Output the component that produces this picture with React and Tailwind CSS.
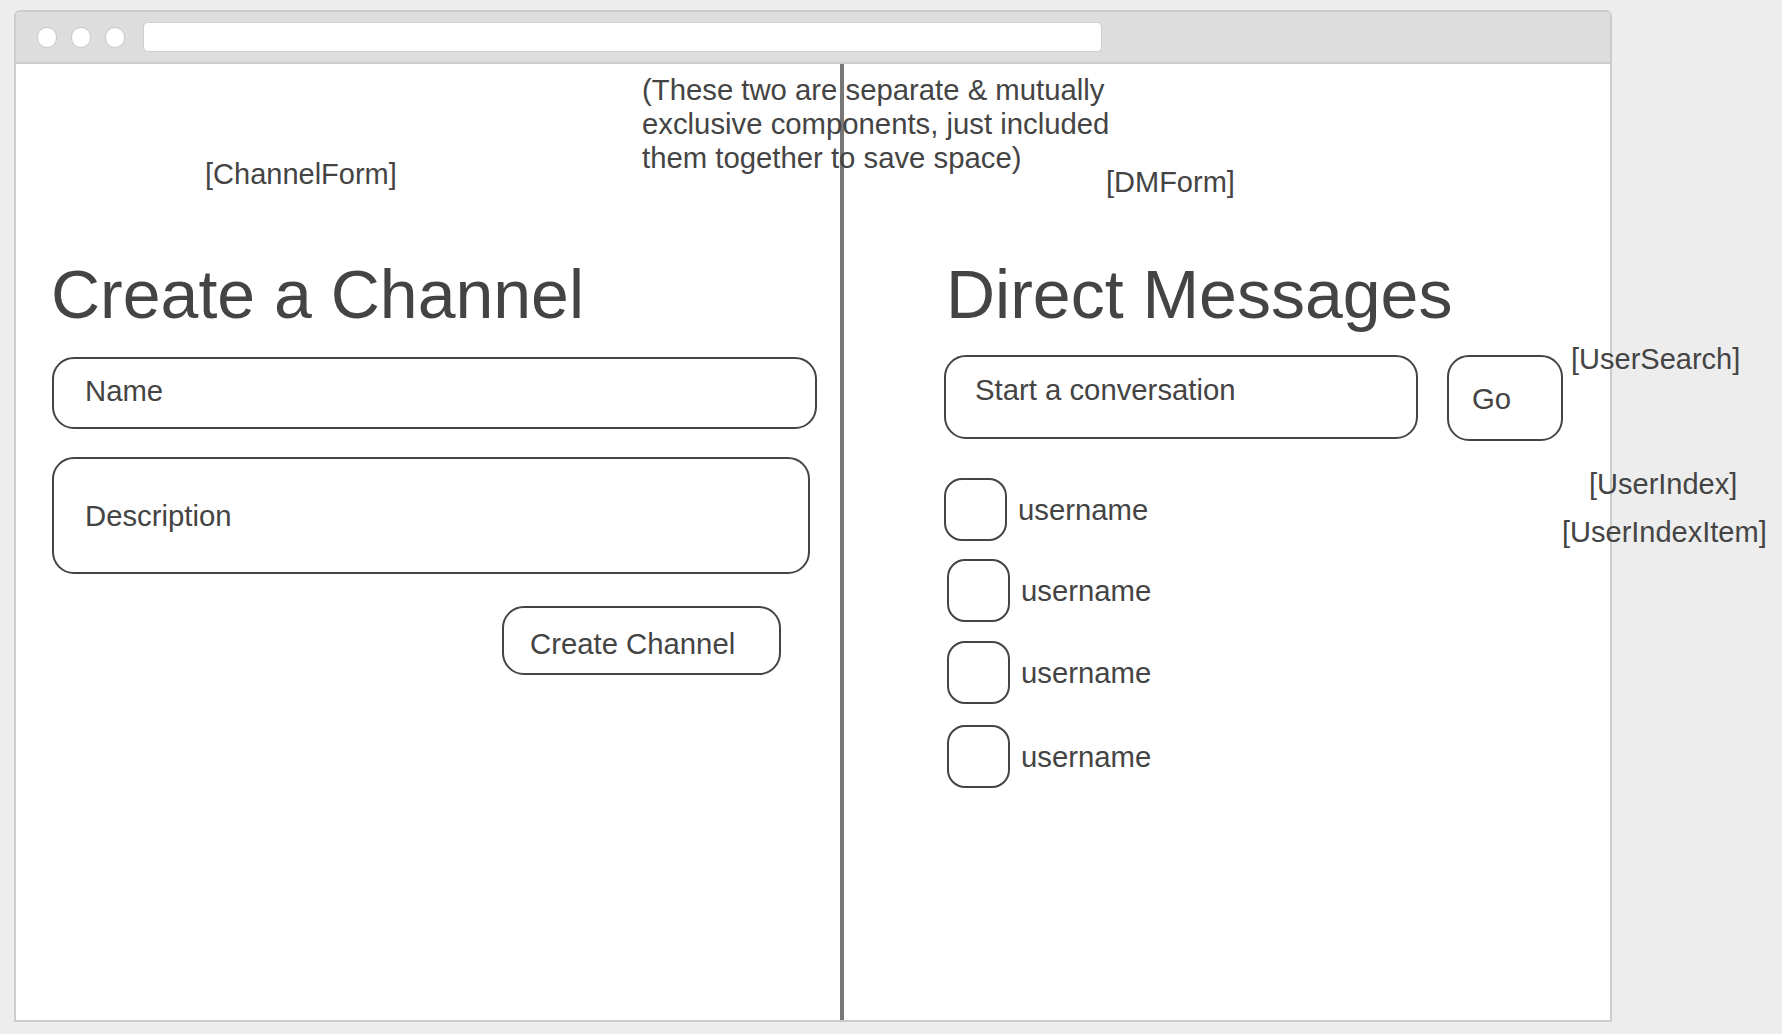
import React from "react";

function Circle() {
  return <div className="w-[20px] h-[21px] rounded-full bg-white border border-[#c8c8c8]" />;
}

function UserItem({ first, top }) {
  return (
    <div className={`flex items-center ${first ? "" : "ml-[3px]"}`} style={{ marginTop: top }}>
      <div className="w-[63px] h-[63px] border-2 border-[#444] rounded-[18px] shrink-0" />
      <div className="ml-[11px] text-[29.3px] leading-[34px]">username</div>
    </div>
  );
}

export default function App() {
  return (
    <div className="w-[1782px] h-[1034px] bg-[#ededed] pt-[10px] pl-[14px] overflow-hidden font-['Liberation_Sans',Arial,sans-serif] text-[#444]">
      <div className="relative w-[1598px] h-[1012px] border-2 border-[#cccccc] rounded-t-[6px] bg-white flex flex-col">
        {/* title bar */}
        <div className="h-[52px] shrink-0 bg-[#dddddd] border-b-2 border-[#cccccc] rounded-t-[4px] flex items-center pl-[21px]">
          <div className="flex gap-[14px]">
            <Circle />
            <Circle />
            <Circle />
          </div>
          <div className="ml-[18px] w-[959px] h-[30px] rounded-[5px] bg-white border border-[#cfcfcf]" />
        </div>

        {/* body */}
        <div className="flex flex-1 min-h-0">
          {/* Channel form */}
          <div className="w-[824px] shrink-0 flex flex-col pl-[35px]">
            <div className="mt-[93px] ml-[154px] text-[29px] leading-[34px]">[ChannelForm]</div>
            <h1 className="mt-[69px] text-[68px] leading-none">Create a Channel</h1>
            <div className="mt-[29px] ml-[1px] w-[765px] h-[72px] border-2 border-[#444] rounded-[22px] flex items-center pl-[31px] pb-[4px] text-[29.3px] leading-[34px]">
              Name
            </div>
            <div className="mt-[28px] ml-[1px] w-[758px] h-[117px] border-2 border-[#444] rounded-[22px] flex items-center pl-[31px] text-[29.3px] leading-[34px]">
              Description
            </div>
            <div className="mt-[32px] ml-[451px] w-[279px] h-[69px] border-2 border-[#444] rounded-[22px] flex items-center pl-[26px] pt-[7px] text-[29.3px] leading-[34px]">
              Create Channel
            </div>
          </div>

          {/* divider */}
          <div className="w-[4px] shrink-0 bg-[#777777]" />

          {/* DM form */}
          <div className="flex-1 flex flex-col pl-[102px]">
            <div className="mt-[101px] ml-[160px] text-[29px] leading-[34px]">[DMForm]</div>
            <h1 className="mt-[61px] text-[68px] leading-none">Direct Messages</h1>
            <div className="mt-[27px] -ml-[2px] flex items-start">
              <div className="w-[474px] h-[84px] border-2 border-[#444] rounded-[22px] pl-[29px] pt-[16px] text-[29.3px] leading-[34px] shrink-0">
                Start a conversation
              </div>
              <div className="ml-[29px] w-[116px] h-[86px] border-2 border-[#444] rounded-[22px] flex items-center pl-[23px] pt-[2px] text-[29.3px] leading-[34px] shrink-0">
                Go
              </div>
              <div className="ml-[8px] -mt-[13px] text-[29px] leading-[34px] whitespace-nowrap">[UserSearch]</div>
            </div>
            <div className="-ml-[2px] flex flex-col">
              <UserItem first top={37} />
              <UserItem top={18} />
              <UserItem top={19} />
              <UserItem top={21} />
            </div>
          </div>
        </div>

        {/* annotations */}
        <div className="absolute left-[626px] top-[61px] text-[29.3px] leading-[34px] whitespace-nowrap">
          (These two are separate &amp; mutually
          <br />
          exclusive components, just included
          <br />
          them together to save space)
        </div>
        <div className="absolute left-[1573px] top-[455px] text-[29px] leading-[34px] whitespace-nowrap">[UserIndex]</div>
        <div className="absolute left-[1546px] top-[503px] text-[29px] leading-[34px] whitespace-nowrap">[UserIndexItem]</div>
      </div>
    </div>
  );
}
